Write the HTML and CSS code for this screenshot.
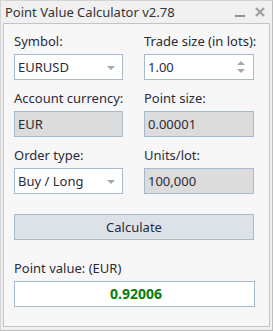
FILE: index.html
```html
<!DOCTYPE html>
<html lang="en">
<head>
  <meta charset="UTF-8">
  <title>Point Value Calculator</title>
  <link rel="stylesheet" href="styles.css">
</head>
<body>
  <div class="window">
    <div class="titlebar">
      <span class="title">Point Value Calculator v2.78</span>
      <span class="tb-btns">
        <span class="tb-min"></span>
        <svg class="tb-close" width="10" height="10" viewBox="0 0 10 10">
          <path d="M1 1 L9 9 M9 1 L1 9" stroke="#a0a0a0" stroke-width="2.2"/>
        </svg>
      </span>
    </div>

    <div class="panel">
      <div class="grid">
        <div class="field">
          <label>Symbol:</label>
          <div class="box">EURUSD <span class="arrow"></span></div>
        </div>
        <div class="field">
          <label>Trade size (in lots):</label>
          <div class="box">1.00
            <span class="spin"><span class="up"></span><span class="down"></span></span>
          </div>
        </div>

        <div class="field">
          <label>Account currency:</label>
          <div class="box ro">EUR</div>
        </div>
        <div class="field">
          <label>Point size:</label>
          <div class="box ro">0.00001</div>
        </div>

        <div class="field">
          <label>Order type:</label>
          <div class="box">Buy / Long <span class="arrow"></span></div>
        </div>
        <div class="field">
          <label>Units/lot:</label>
          <div class="box ro">100,000</div>
        </div>
      </div>

      <button class="calc">Calculate</button>

      <div class="result">
        <label>Point value: (EUR)</label>
        <div class="box out">0.92006</div>
      </div>
    </div>
  </div>
</body>
</html>
```

FILE: styles.css
```css
body {
  margin: 0;
  font-family: "Noto Sans", "Open Sans", sans-serif;
  font-size: 13px;
  color: #2b2b38;
}

.window {
  box-sizing: border-box;
  width: 273px;
  height: 331px;
  background: #f0f0f0;
  border: 1px solid #d4d4d4;
  border-right-color: #bdbdbd;
  border-bottom-color: #bdbdbd;
  display: flex;
  flex-direction: column;
}

.titlebar {
  height: 22px;
  display: flex;
  align-items: center;
  padding-left: 4px;
  padding-right: 7px;
}

.title {
  flex: 1;
  font-size: 13px;
  color: #333;
}

.tb-btns {
  display: flex;
  align-items: center;
  gap: 10px;
}

.tb-min {
  width: 10px;
  height: 2px;
  background: #909090;
  margin-top: 8px;
}

.panel {
  flex: 1;
  margin: 0 2px 3px 2px;
  border: 1px solid #c4c4c4;
  background: #f7f7f7;
  padding: 9px 14px 0 10px;
}

.grid {
  display: grid;
  grid-template-columns: 109px 110px;
  column-gap: 21px;
}

label {
  display: block;
  height: 17px;
  line-height: 17px;
  margin-bottom: 4px;
  white-space: nowrap;
}

.field {
  margin-bottom: 10px;
}

.box {
  position: relative;
  box-sizing: border-box;
  height: 26px;
  line-height: 24px;
  border: 1px solid #a9b9c8;
  background: #fff;
  padding-left: 3px;
  white-space: nowrap;
}

.box.ro {
  background: #dcdcdc;
}

.arrow {
  position: absolute;
  right: 7px;
  top: 11px;
  border-left: 4px solid transparent;
  border-right: 4px solid transparent;
  border-top: 4px solid #a8a8a8;
}

.spin .up,
.spin .down {
  position: absolute;
  right: 8px;
  border-left: 4px solid transparent;
  border-right: 4px solid transparent;
}

.spin .up {
  top: 6px;
  border-bottom: 4px solid #a8a8a8;
}

.spin .down {
  top: 14px;
  border-top: 4px solid #a8a8a8;
}

.calc {
  display: block;
  box-sizing: border-box;
  width: 240px;
  height: 26px;
  margin-top: 10px;
  border: 1px solid #a9b9c8;
  background: #dde2e9;
  font: inherit;
  color: inherit;
}

.result {
  margin-top: 20px;
}

.box.out {
  text-align: center;
  font-weight: bold;
  font-size: 14px;
  color: #0a7d0a;
}
```
